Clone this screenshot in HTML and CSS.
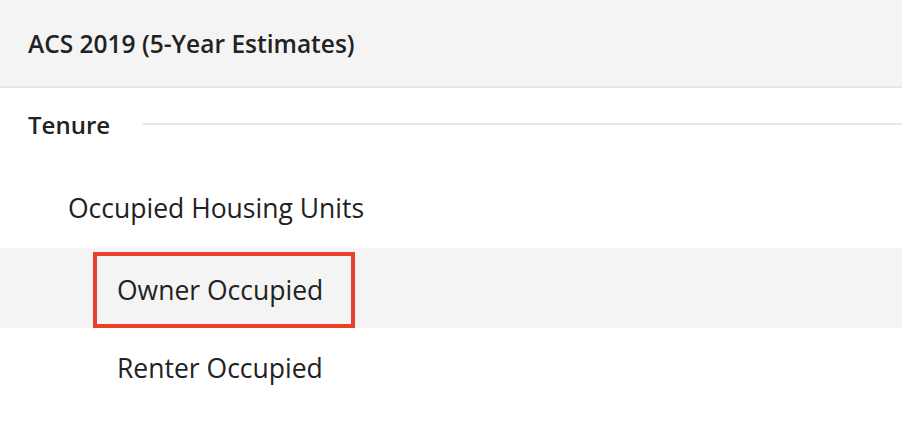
FILE: index.html
```html
<!DOCTYPE html>
<html lang="en">
<head>
<meta charset="utf-8">
<title>ACS 2019</title>
<link rel="stylesheet" href="styles.css">
</head>
<body>
<div class="panel">
  <div class="panel-header">ACS 2019 (5-Year Estimates)</div>
  <div class="section-title">
    <span class="section-label">Tenure</span>
    <span class="section-rule"></span>
  </div>
  <ul class="var-list">
    <li class="var-row level-1"><span class="var-item">Occupied Housing Units</span></li>
    <li class="var-row level-2 is-active"><span class="var-item is-selected">Owner Occupied</span></li>
    <li class="var-row level-2"><span class="var-item">Renter Occupied</span></li>
  </ul>
</div>
</body>
</html>
```

FILE: styles.css
```css
html, body {
  margin: 0;
  padding: 0;
  background: #ffffff;
}

body {
  font-family: "Open Sans", "Noto Sans", "Liberation Sans", sans-serif;
  color: #222222;
}

.panel {
  width: 902px;
}

.panel-header {
  height: 86px;
  display: flex;
  align-items: center;
  padding-left: 28px;
  background: #f4f4f4;
  border-bottom: 2px solid #e6e6e6;
  font-size: 24.5px;
  font-weight: 600;
}

.section-title {
  height: 72px;
  display: flex;
  align-items: center;
  padding-left: 28px;
}

.section-label {
  font-size: 24px;
  font-weight: 600;
}

.section-rule {
  flex: 1;
  height: 2px;
  margin-left: 33px;
  background: #e6e6e6;
}

.var-list {
  list-style: none;
  margin: 8px 0 0 0;
  padding: 0;
}

.var-row {
  height: 80px;
  display: flex;
  align-items: center;
  font-size: 26.5px;
}

.var-row.level-1 {
  padding-left: 44px;
}

.var-row.level-2 {
  padding-left: 93px;
}

.var-row.is-active {
  background: #f4f4f4;
  align-items: flex-start;
  padding-top: 4px;
  height: 76px;
}

.var-item {
  padding: 0 24px;
}

.var-item.is-selected {
  box-sizing: border-box;
  height: 76px;
  display: flex;
  align-items: center;
  padding: 0 28px 0 20px;
  border: 4px solid #e8402a;
}
```
